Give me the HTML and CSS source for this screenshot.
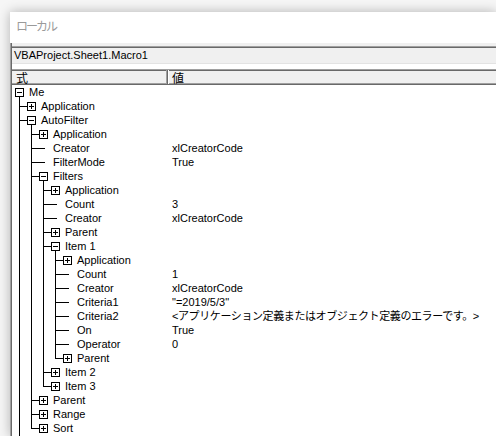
FILE: index.html
```html
<!DOCTYPE html>
<html lang="ja">
<head>
<meta charset="utf-8">
<title>ローカル</title>
<link rel="stylesheet" href="styles.css">
</head>
<body>
<div class="win">
  <div class="title">ローカル</div>
  <div class="panel"><div class="panel-in">
    <div class="combo-wrap"><div class="combo">VBAProject.Sheet1.Macro1</div></div>
    <div class="gap"></div>
    <div class="head"><div class="hc h1">式</div><div class="hc h2">値</div></div>
    <div class="rows">
      <div class="row"><div class="name"><span class="n open"><span class="box"></span></span><span class="lb">Me</span></div><div class="val"></div></div>
      <div class="row"><div class="name"><span class="g t"></span><span class="n bx"><span class="box p"></span></span><span class="lb">Application</span></div><div class="val"></div></div>
      <div class="row"><div class="name"><span class="g t"></span><span class="n bx open"><span class="box"></span></span><span class="lb">AutoFilter</span></div><div class="val"></div></div>
      <div class="row"><div class="name"><span class="g v"></span><span class="g t"></span><span class="n bx"><span class="box p"></span></span><span class="lb">Application</span></div><div class="val"></div></div>
      <div class="row"><div class="name"><span class="g v"></span><span class="g t"></span><span class="n leaf"></span><span class="lb">Creator</span></div><div class="val">xlCreatorCode</div></div>
      <div class="row"><div class="name"><span class="g v"></span><span class="g t"></span><span class="n leaf"></span><span class="lb">FilterMode</span></div><div class="val">True</div></div>
      <div class="row"><div class="name"><span class="g v"></span><span class="g t"></span><span class="n bx open"><span class="box"></span></span><span class="lb">Filters</span></div><div class="val"></div></div>
      <div class="row"><div class="name"><span class="g v"></span><span class="g v"></span><span class="g t"></span><span class="n bx"><span class="box p"></span></span><span class="lb">Application</span></div><div class="val"></div></div>
      <div class="row"><div class="name"><span class="g v"></span><span class="g v"></span><span class="g t"></span><span class="n leaf"></span><span class="lb">Count</span></div><div class="val">3</div></div>
      <div class="row"><div class="name"><span class="g v"></span><span class="g v"></span><span class="g t"></span><span class="n leaf"></span><span class="lb">Creator</span></div><div class="val">xlCreatorCode</div></div>
      <div class="row"><div class="name"><span class="g v"></span><span class="g v"></span><span class="g t"></span><span class="n bx"><span class="box p"></span></span><span class="lb">Parent</span></div><div class="val"></div></div>
      <div class="row"><div class="name"><span class="g v"></span><span class="g v"></span><span class="g t"></span><span class="n bx open"><span class="box"></span></span><span class="lb">Item 1</span></div><div class="val"></div></div>
      <div class="row"><div class="name"><span class="g v"></span><span class="g v"></span><span class="g v"></span><span class="g t"></span><span class="n bx"><span class="box p"></span></span><span class="lb">Application</span></div><div class="val"></div></div>
      <div class="row"><div class="name"><span class="g v"></span><span class="g v"></span><span class="g v"></span><span class="g t"></span><span class="n leaf"></span><span class="lb">Count</span></div><div class="val">1</div></div>
      <div class="row"><div class="name"><span class="g v"></span><span class="g v"></span><span class="g v"></span><span class="g t"></span><span class="n leaf"></span><span class="lb">Creator</span></div><div class="val">xlCreatorCode</div></div>
      <div class="row"><div class="name"><span class="g v"></span><span class="g v"></span><span class="g v"></span><span class="g t"></span><span class="n leaf"></span><span class="lb">Criteria1</span></div><div class="val">"=2019/5/3"</div></div>
      <div class="row"><div class="name"><span class="g v"></span><span class="g v"></span><span class="g v"></span><span class="g t"></span><span class="n leaf"></span><span class="lb">Criteria2</span></div><div class="val ja">&lt;アプリケーション定義またはオブジェクト定義のエラーです。&gt;</div></div>
      <div class="row"><div class="name"><span class="g v"></span><span class="g v"></span><span class="g v"></span><span class="g t"></span><span class="n leaf"></span><span class="lb">On</span></div><div class="val">True</div></div>
      <div class="row"><div class="name"><span class="g v"></span><span class="g v"></span><span class="g v"></span><span class="g t"></span><span class="n leaf"></span><span class="lb">Operator</span></div><div class="val">0</div></div>
      <div class="row"><div class="name"><span class="g v"></span><span class="g v"></span><span class="g v"></span><span class="g l"></span><span class="n bx"><span class="box p"></span></span><span class="lb">Parent</span></div><div class="val"></div></div>
      <div class="row"><div class="name"><span class="g v"></span><span class="g v"></span><span class="g t"></span><span class="n bx"><span class="box p"></span></span><span class="lb">Item 2</span></div><div class="val"></div></div>
      <div class="row"><div class="name"><span class="g v"></span><span class="g v"></span><span class="g l"></span><span class="n bx"><span class="box p"></span></span><span class="lb">Item 3</span></div><div class="val"></div></div>
      <div class="row"><div class="name"><span class="g v"></span><span class="g t"></span><span class="n bx"><span class="box p"></span></span><span class="lb">Parent</span></div><div class="val"></div></div>
      <div class="row"><div class="name"><span class="g v"></span><span class="g t"></span><span class="n bx"><span class="box p"></span></span><span class="lb">Range</span></div><div class="val"></div></div>
      <div class="row"><div class="name"><span class="g v"></span><span class="g l"></span><span class="n bx"><span class="box p"></span></span><span class="lb">Sort</span></div><div class="val"></div></div>
      <div class="row tail"><div class="name"><span class="g v"></span></div></div>
    </div>
  </div></div>
</div>
</body>
</html>
```

FILE: styles.css
```css
html, body {
  margin: 0;
  padding: 0;
}
body {
  width: 496px;
  height: 436px;
  overflow: hidden;
  background: #f6f6f6;
  font-family: "Liberation Sans", "Noto Sans CJK JP", sans-serif;
  font-size: 11px;
  color: #000;
}
.win {
  margin: 12px 0 0 10px;
  width: 486px;
  height: 424px;
  overflow: hidden;
  background: #fff;
  box-shadow: 0 0 11px rgba(0, 0, 0, 0.28);
}
.title {
  height: 31px;
  box-sizing: border-box;
  padding: 6px 0 0 6px;
  font-family: "Noto Sans CJK JP", sans-serif;
  font-size: 12px;
  line-height: 16px;
  letter-spacing: -2px;
  color: #9a9a9a;
}
.panel {
  border-left: 1px solid #a0a0a0;
}
.panel-in {
  border-left: 1px solid #696969;
}
.combo-wrap {
  background: #f0f0f0;
  padding-top: 3px;
}
.combo {
  height: 16px;
  border-top: 1px solid #a0a0a0;
  border-bottom: 1px solid #e3e3e3;
  box-shadow: inset 0 1px #696969;
  background: #f0f0f0;
  padding-left: 2px;
  line-height: 17px;
}
.gap {
  height: 5px;
  background: #fff;
}
.head {
  display: flex;
  height: 14px;
  border-top: 1px solid #a0a0a0;
  border-bottom: 1px solid #696969;
  box-shadow: inset 0 1px #696969, inset 0 -1px #a0a0a0;
  background: #f0f0f0;
  font-family: "Noto Sans CJK JP", sans-serif;
  font-size: 12px;
  line-height: 15px;
}
.hc {
  height: 14px;
}
.h1 {
  width: 156px;
  padding-left: 4px;
  box-sizing: border-box;
  border-right: 1px solid #696969;
  box-shadow: inset -1px 0 #a0a0a0;
}
.h2 {
  flex: 1;
  border-left: 1px solid #fff;
  padding-left: 3px;
}
.rows {
  display: flex;
  flex-direction: column;
}
.row {
  display: flex;
  height: 14px;
  line-height: 14px;
  white-space: nowrap;
}
.row.tail {
  height: 1px;
}
.row.tail .g {
  height: 1px;
}
.name {
  flex: 0 0 157px;
  box-sizing: border-box;
  padding-left: 1px;
  display: flex;
}
.val {
  flex: 1;
  padding-left: 3px;
}
.ja {
  letter-spacing: -0.4px;
}
.lb {
  margin-left: 4px;
}
.g, .n {
  flex: 0 0 12px;
  height: 14px;
  position: relative;
}
.g::before, .g::after, .n::before, .n::after {
  content: "";
  position: absolute;
  background: #000;
}
.g::before {
  left: 6px;
  top: 0;
  width: 1px;
  height: 100%;
}
.g.l::before {
  height: 8px;
}
.g.v::after {
  display: none;
}
.g.t::after, .g.l::after {
  left: 6px;
  top: 7px;
  width: 6px;
  height: 1px;
}
.n::before, .n::after {
  display: none;
}
.n.leaf::before {
  display: block;
  left: 0;
  top: 7px;
  width: 8px;
  height: 1px;
}
.n.bx::before {
  display: block;
  left: 0;
  top: 7px;
  width: 2px;
  height: 1px;
}
.n.open::after {
  display: block;
  left: 6px;
  top: 12px;
  width: 1px;
  height: 2px;
}
.box {
  position: absolute;
  left: 2px;
  top: 3px;
  width: 7px;
  height: 7px;
  border: 1px solid #000;
  background: #fff;
}
.box::before, .box::after {
  content: "";
  position: absolute;
  background: #000;
}
.box::before {
  left: 1px;
  top: 3px;
  width: 5px;
  height: 1px;
}
.box.p::after {
  left: 3px;
  top: 1px;
  width: 1px;
  height: 5px;
}
```
